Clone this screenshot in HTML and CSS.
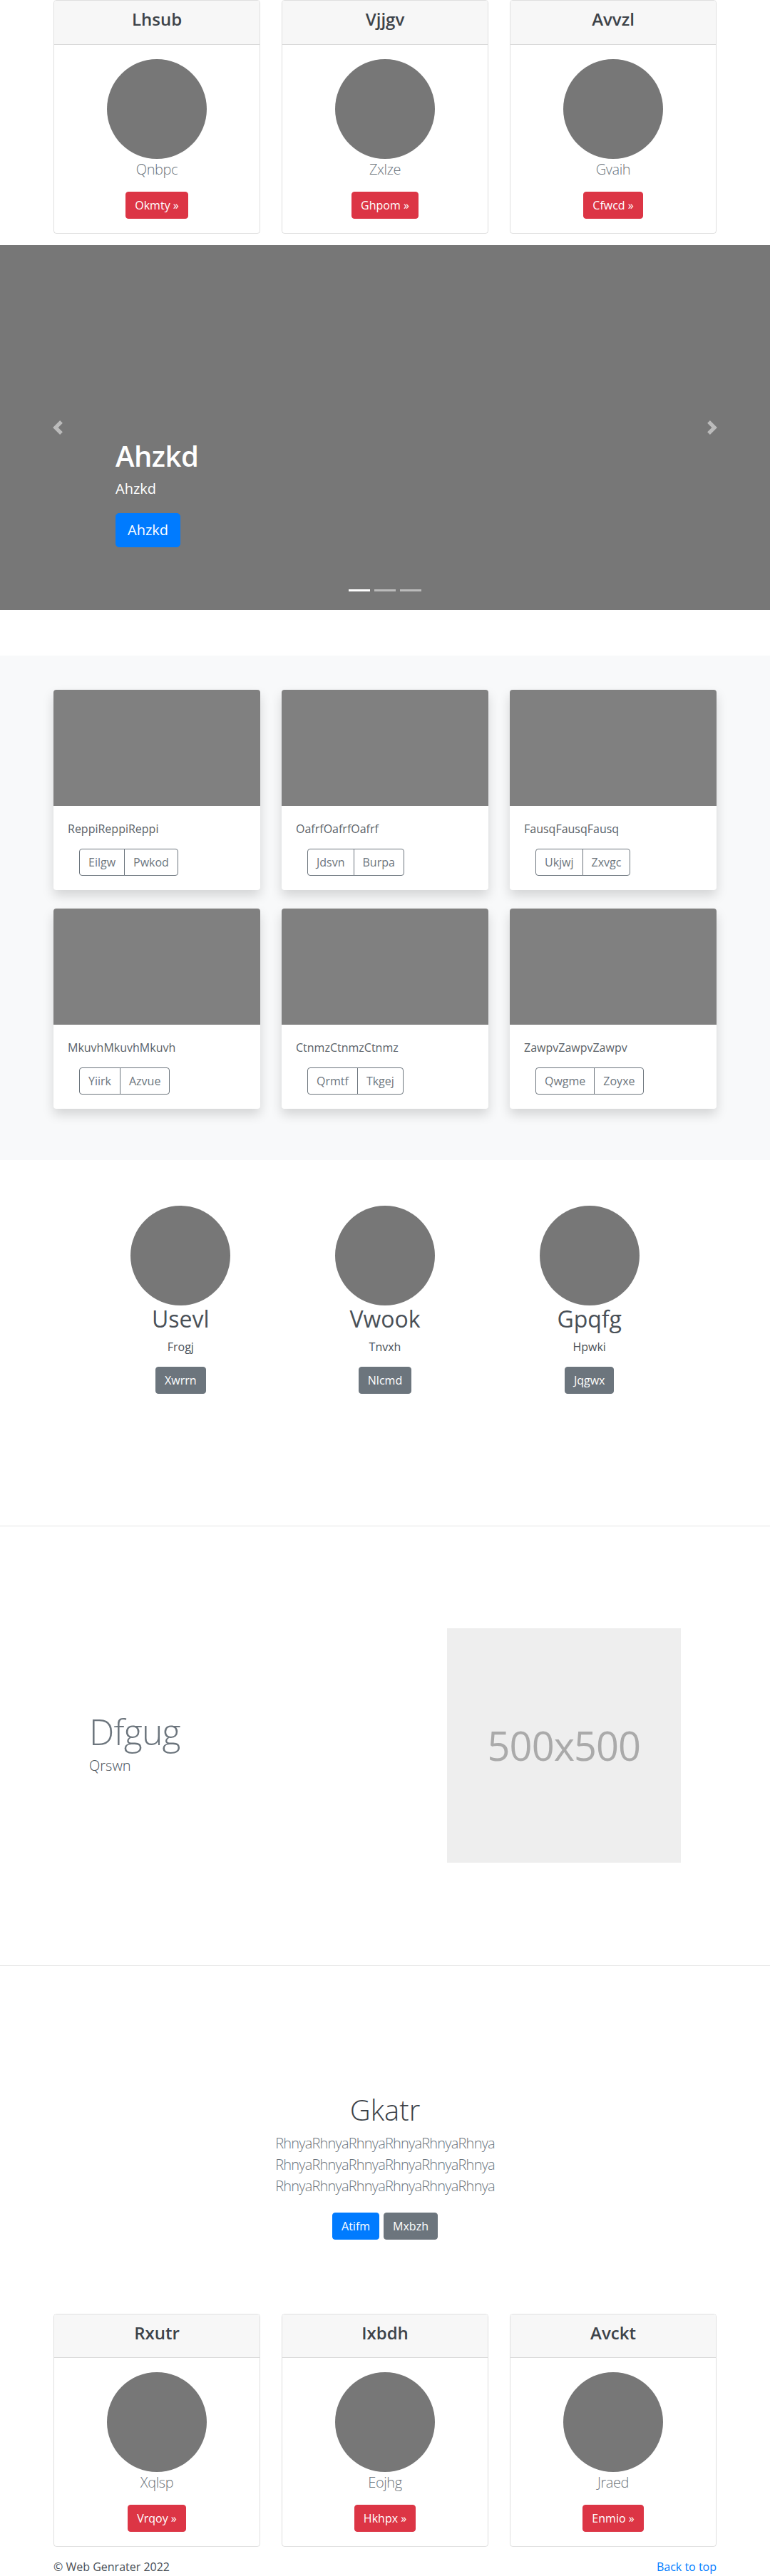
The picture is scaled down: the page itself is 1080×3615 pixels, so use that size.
FILE: index.html
```html
<!DOCTYPE html>
<html lang="en">
<head>
    <meta charset="UTF-8">
    <meta name="viewport" content="width=device-width, initial-scale=1.0">
    <title>Web Genrater</title>
    <link rel="stylesheet" href="styles.css">
</head>
<body>
    <!-- Pricing style cards -->
    <div class="deck">
        <div class="price-card">
            <div class="price-head"><h4>Lhsub</h4></div>
            <div class="price-body">
                <span class="avatar"></span>
                <p class="price-name">Qnbpc</p>
                <a class="btn btn-danger" href="#">Okmty &raquo;</a>
            </div>
        </div>
        <div class="price-card">
            <div class="price-head"><h4>Vjjgv</h4></div>
            <div class="price-body">
                <span class="avatar"></span>
                <p class="price-name">Zxlze</p>
                <a class="btn btn-danger" href="#">Ghpom &raquo;</a>
            </div>
        </div>
        <div class="price-card">
            <div class="price-head"><h4>Avvzl</h4></div>
            <div class="price-body">
                <span class="avatar"></span>
                <p class="price-name">Gvaih</p>
                <a class="btn btn-danger" href="#">Cfwcd &raquo;</a>
            </div>
        </div>
    </div>

    <!-- Carousel -->
    <div class="carousel">
        <ol class="indicators">
            <li class="active"></li>
            <li></li>
            <li></li>
        </ol>
        <div class="caption">
            <h1>Ahzkd</h1>
            <p>Ahzkd</p>
            <p><a class="btn btn-lg btn-primary" href="#">Ahzkd</a></p>
        </div>
        <a class="ctrl ctrl-prev" href="#">
            <svg width="20" height="20" viewBox="0 0 8 8" fill="#fff"><path d="M5.25 0l-4 4 4 4 1.5-1.5L4.25 4l2.5-2.5L5.25 0z"/></svg>
        </a>
        <a class="ctrl ctrl-next" href="#">
            <svg width="20" height="20" viewBox="0 0 8 8" fill="#fff"><path d="M2.75 0l-1.5 1.5L3.75 4l-2.5 2.5L2.75 8l4-4-4-4z"/></svg>
        </a>
    </div>

    <!-- Album -->
    <section class="album">
        <div class="album-grid">
            <div class="thumb-card">
                <div class="thumb"></div>
                <div class="thumb-body">
                    <p>ReppiReppiReppi</p>
                    <div class="btn-group"><a class="btn btn-outline" href="#">Eilgw</a><a class="btn btn-outline" href="#">Pwkod</a></div>
                </div>
            </div>
            <div class="thumb-card">
                <div class="thumb"></div>
                <div class="thumb-body">
                    <p>OafrfOafrfOafrf</p>
                    <div class="btn-group"><a class="btn btn-outline" href="#">Jdsvn</a><a class="btn btn-outline" href="#">Burpa</a></div>
                </div>
            </div>
            <div class="thumb-card">
                <div class="thumb"></div>
                <div class="thumb-body">
                    <p>FausqFausqFausq</p>
                    <div class="btn-group"><a class="btn btn-outline" href="#">Ukjwj</a><a class="btn btn-outline" href="#">Zxvgc</a></div>
                </div>
            </div>
            <div class="thumb-card">
                <div class="thumb"></div>
                <div class="thumb-body">
                    <p>MkuvhMkuvhMkuvh</p>
                    <div class="btn-group"><a class="btn btn-outline" href="#">Yiirk</a><a class="btn btn-outline" href="#">Azvue</a></div>
                </div>
            </div>
            <div class="thumb-card">
                <div class="thumb"></div>
                <div class="thumb-body">
                    <p>CtnmzCtnmzCtnmz</p>
                    <div class="btn-group"><a class="btn btn-outline" href="#">Qrmtf</a><a class="btn btn-outline" href="#">Tkgej</a></div>
                </div>
            </div>
            <div class="thumb-card">
                <div class="thumb"></div>
                <div class="thumb-body">
                    <p>ZawpvZawpvZawpv</p>
                    <div class="btn-group"><a class="btn btn-outline" href="#">Qwgme</a><a class="btn btn-outline" href="#">Zoyxe</a></div>
                </div>
            </div>
        </div>
    </section>

    <!-- Marketing columns -->
    <div class="marketing">
        <div class="mk-col">
            <span class="avatar"></span>
            <h2>Usevl</h2>
            <p>Frogj</p>
            <a class="btn btn-secondary" href="#">Xwrrn</a>
        </div>
        <div class="mk-col">
            <span class="avatar"></span>
            <h2>Vwook</h2>
            <p>Tnvxh</p>
            <a class="btn btn-secondary" href="#">Nlcmd</a>
        </div>
        <div class="mk-col">
            <span class="avatar"></span>
            <h2>Gpqfg</h2>
            <p>Hpwki</p>
            <a class="btn btn-secondary" href="#">Jqgwx</a>
        </div>
    </div>

    <hr class="divider">

    <!-- Featurette -->
    <div class="featurette">
        <div class="feat-text">
            <h2>Dfgug</h2>
            <p>Qrswn</p>
        </div>
        <div class="feat-media">
            <div class="placeholder">500x500</div>
        </div>
    </div>

    <hr class="divider">

    <!-- Jumbotron -->
    <section class="jumbo">
        <h1>Gkatr</h1>
        <p class="lead">RhnyaRhnyaRhnyaRhnyaRhnyaRhnya RhnyaRhnyaRhnyaRhnyaRhnyaRhnya RhnyaRhnyaRhnyaRhnyaRhnyaRhnya</p>
        <div class="jumbo-actions">
            <a class="btn btn-primary" href="#">Atifm</a>
            <a class="btn btn-secondary" href="#">Mxbzh</a>
        </div>
    </section>

    <div class="deck">
        <div class="price-card">
            <div class="price-head"><h4>Rxutr</h4></div>
            <div class="price-body">
                <span class="avatar"></span>
                <p class="price-name">Xqlsp</p>
                <a class="btn btn-danger" href="#">Vrqoy &raquo;</a>
            </div>
        </div>
        <div class="price-card">
            <div class="price-head"><h4>Ixbdh</h4></div>
            <div class="price-body">
                <span class="avatar"></span>
                <p class="price-name">Eojhg</p>
                <a class="btn btn-danger" href="#">Hkhpx &raquo;</a>
            </div>
        </div>
        <div class="price-card">
            <div class="price-head"><h4>Avckt</h4></div>
            <div class="price-body">
                <span class="avatar"></span>
                <p class="price-name">Jraed</p>
                <a class="btn btn-danger" href="#">Enmio &raquo;</a>
            </div>
        </div>
    </div>

    <!-- Footer -->
    <footer class="footer">
        <p>&copy; Web Genrater 2022</p>
        <a href="#">Back to top</a>
    </footer>
</body>
</html>
```

FILE: styles.css
```css
* {
    box-sizing: border-box;
}

body {
    margin: 0;
    font-family: "Open Sans", "Noto Sans", Arial, sans-serif;
    font-size: 16px;
    line-height: 1.5;
    color: #343a40;
    background: #fff;
}

h1, h2, h4, p {
    margin: 0;
}

a {
    color: #007bff;
    text-decoration: none;
}

/* Buttons */
.btn {
    display: inline-block;
    padding: 6px 12px;
    font-size: 16px;
    line-height: 1.5;
    border: 1px solid transparent;
    border-radius: 4px;
    color: #fff;
    text-align: center;
}

.btn-lg {
    padding: 8px 16px;
    font-size: 20px;
    border-radius: 5px;
}

.btn-danger {
    background: #dc3545;
    border-color: #dc3545;
}

.btn-primary {
    background: #007bff;
    border-color: #007bff;
}

.btn-secondary {
    background: #6c757d;
    border-color: #6c757d;
}

.btn-outline {
    color: #6c757d;
    border-color: #6c757d;
    background: transparent;
}

.avatar {
    display: block;
    width: 140px;
    height: 140px;
    margin: 0 auto;
    border-radius: 50%;
    background: #777;
}

/* Pricing cards */
.deck {
    width: 930px;
    margin: 0 auto 16px;
    display: grid;
    grid-template-columns: repeat(3, 1fr);
    gap: 30px;
}

.price-card {
    border: 1px solid rgba(0, 0, 0, .125);
    border-radius: 4px;
    text-align: center;
    overflow: hidden;
}

.price-head {
    background: #f7f7f7;
    border-bottom: 1px solid rgba(0, 0, 0, .125);
    padding: 12px 20px;
}

.price-head h4 {
    font-size: 24px;
    font-weight: 600;
    line-height: 1.2;
    margin-bottom: 8px;
    color: #3d4349;
}

.price-body {
    padding: 20px;
}

.price-name {
    font-size: 20px;
    font-weight: 300;
    letter-spacing: -.4px;
    color: #6c757d;
    margin-bottom: 16px;
}

/* Carousel */
.carousel {
    position: relative;
    height: 512px;
    margin-bottom: 64px;
    background: #777;
    display: flex;
    flex-direction: column;
    justify-content: flex-end;
    padding: 0 15% 48px;
}

.caption {
    padding: 20px 0;
    color: #fff;
}

.caption h1 {
    font-size: 40px;
    font-weight: 600;
    line-height: 1.2;
    letter-spacing: -.5px;
    margin-bottom: 8px;
}

.caption p {
    font-size: 20px;
    line-height: 1.4;
    margin-bottom: 20px;
}

.caption .btn {
    line-height: 1.5;
}

.ctrl {
    position: absolute;
    top: 0;
    bottom: 0;
    width: 15%;
    display: flex;
    align-items: center;
    justify-content: center;
    opacity: .5;
}

.ctrl-prev {
    left: 0;
}

.ctrl-next {
    right: 0;
}

.indicators {
    position: absolute;
    left: 0;
    right: 0;
    bottom: 26px;
    margin: 0;
    padding: 0;
    list-style: none;
    display: flex;
    justify-content: center;
    gap: 6px;
}

.indicators li {
    width: 30px;
    height: 3px;
    background: #fff;
    opacity: .5;
}

.indicators li.active {
    opacity: 1;
}

/* Album */
.album {
    background: #f8f9fa;
    padding: 48px 0 72px;
    margin-bottom: 64px;
}

.album-grid {
    width: 930px;
    margin: 0 auto;
    display: grid;
    grid-template-columns: repeat(3, 1fr);
    column-gap: 30px;
    row-gap: 26px;
}

.thumb-card {
    background: #fff;
    border-radius: 4px;
    overflow: hidden;
    box-shadow: 0 8px 16px rgba(0, 0, 0, .15);
}

.thumb {
    height: 163px;
    background: #808080;
}

.thumb-body {
    padding: 20px;
}

.thumb-body p {
    color: #5a6268;
    margin-bottom: 16px;
}

.btn-group {
    display: inline-flex;
    margin-left: 16px;
}

.btn-group .btn:first-child {
    border-top-right-radius: 0;
    border-bottom-right-radius: 0;
}

.btn-group .btn + .btn {
    margin-left: -1px;
    border-top-left-radius: 0;
    border-bottom-left-radius: 0;
}

/* Marketing */
.marketing {
    width: 860px;
    margin: 0 auto;
    display: grid;
    grid-template-columns: repeat(3, 1fr);
    text-align: center;
}

.mk-col {
    padding: 0 15px;
}

.mk-col h2 {
    font-size: 32px;
    font-weight: 400;
    line-height: 1.2;
    margin-bottom: 8px;
    color: #495057;
}

.mk-col p {
    color: #495057;
    margin-bottom: 16px;
}

.divider {
    margin: 185px 0 0;
    border: 0;
    border-top: 1px solid rgba(0, 0, 0, .1);
}

/* Featurette */
.featurette {
    width: 860px;
    margin: 143px auto 144px;
    display: flex;
    align-items: center;
}

.feat-text {
    flex: 0 0 58.3333%;
    padding: 0 15px;
}

.feat-text h2 {
    font-size: 50px;
    font-weight: 300;
    line-height: 1;
    letter-spacing: -.8px;
    color: #6c757d;
    margin-bottom: 8px;
}

.feat-text p {
    font-size: 20px;
    font-weight: 300;
    color: #495057;
}

.feat-media {
    flex: 0 0 41.6667%;
    padding: 0 15px;
}

.placeholder {
    aspect-ratio: 1;
    background: #eee;
    color: #aaa;
    font-size: 56px;
    letter-spacing: -1px;
    display: flex;
    align-items: center;
    justify-content: center;
}

.featurette + .divider {
    margin-top: 0;
}

/* Jumbotron */
.jumbo {
    padding: 178px 0 104px;
    text-align: center;
}

.jumbo h1 {
    font-size: 40px;
    font-weight: 300;
    line-height: 1.2;
    margin-bottom: 8px;
    color: #3d4349;
}

.jumbo .lead {
    max-width: 610px;
    margin: 0 auto 22px;
    font-size: 20px;
    font-weight: 300;
    letter-spacing: -.8px;
    color: #6c757d;
}

.jumbo-actions {
    display: flex;
    justify-content: center;
    gap: 6px;
}

/* Footer */
.footer {
    width: 930px;
    margin: 0 auto;
    display: flex;
    justify-content: space-between;
}

.footer p {
    color: #495057;
}
```
